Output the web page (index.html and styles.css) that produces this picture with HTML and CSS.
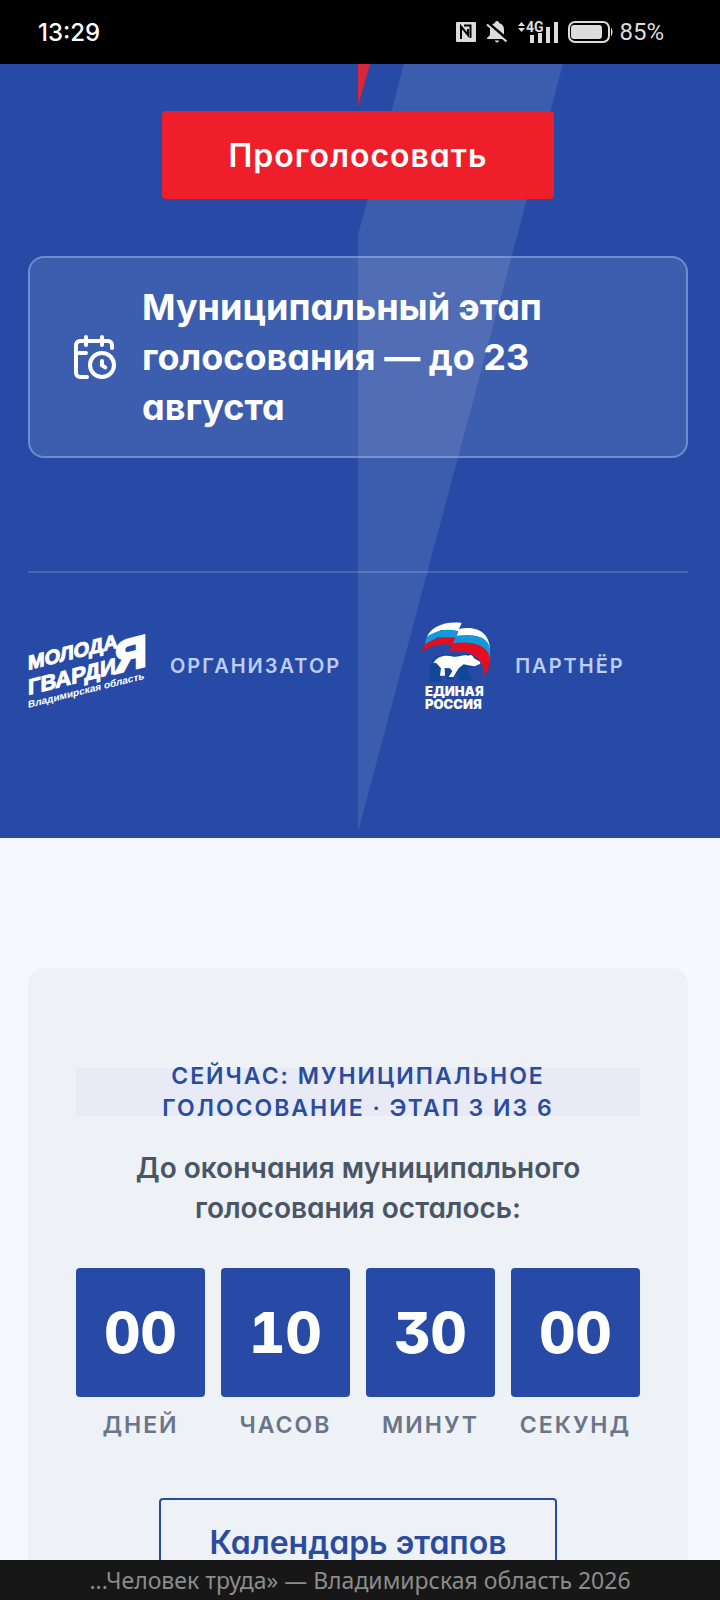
FILE: index.html
```html
<!DOCTYPE html>
<html lang="ru">
<head>
    <meta charset="UTF-8">
    <meta name="viewport" content="width=device-width, initial-scale=1.0">
    <title>Человек труда — Владимирская область 2026</title>
    <link rel="stylesheet" href="styles.css">
</head>
<body>
    <header class="status-bar">
        <span class="status-time">13:29</span>
        <div class="status-icons">
            <svg width="20" height="20" viewBox="0 0 20 20">
                <rect width="20" height="20" rx="1" fill="#dcdcdc"/>
                <path d="M5 17V4.500L12 13V7M8 3.500h6.500V16" fill="none" stroke="#000" stroke-width="2"/>
            </svg>
            <svg width="22" height="22" viewBox="0 0 22 22">
                <path d="M11 0c1.300 0 2 .9 2 2 3.500 1 5 3.500 5 6.500V14l3 4H1v-1l3-3V8.500C4 5.500 5.500 3 9 2c0-1.100.7-2 2-2zM9 19.500h4c0 1-1 2-2 2s-2-1-2-2z" fill="#dcdcdc"/>
                <path d="M1 1l21 18" stroke="#000" stroke-width="3"/>
                <path d="M1 3.500l19.500 17" stroke="#dcdcdc" stroke-width="2"/>
            </svg>
            <svg class="signal" width="40" height="22" viewBox="0 0 40 22" fill="#dcdcdc">
                <path d="M0 5l3.500-4L7 5zM0 7h7l-3.500 4z"/>
                <text x="8" y="11" class="net-label">4G</text>
                <path d="M12 14h4v8h-4zM20 12h4v10h-4zM28 6h4v16h-4zM36 1h4v21h-4z"/>
            </svg>
            <svg width="45" height="22" viewBox="0 0 45 22">
                <rect x="1" y="1" width="40" height="20" rx="6" fill="none" stroke="#dcdcdc" stroke-width="2"/>
                <rect x="3" y="4" width="31" height="14" rx="3" fill="#dcdcdc"/>
                <path d="M43 7c2 1 2 7 0 8z" fill="#dcdcdc"/>
            </svg>
            <span class="battery">85%</span>
        </div>
    </header>

    <main class="page">
        <section class="hero">
            <svg class="hero-decor" width="206" height="774" viewBox="0 0 206 774">
                <path d="M46 0H205L0 768V171z" fill="#fff" fill-opacity=".1"/>
                <path d="M0 0h12L0 42z" fill="#d9263b"/>
            </svg>

            <button class="btn btn-vote" type="button">Проголосовать</button>

            <div class="stage-card">
                <svg class="stage-icon" viewBox="0 0 24 24">
                    <path d="M16 14v2.200l1.600 1M16 2v4M21 7.500V6a2 2 0 0 0-2-2H5a2 2 0 0 0-2 2v14a2 2 0 0 0 2 2h3.500M3 10h5M8 2v4"/>
                    <circle cx="16" cy="16" r="6"/>
                </svg>
                <p class="stage-text">Муниципальный этап голосования — до 23 августа</p>
            </div>

            <div class="partners">
                <div class="partner">
                    <svg class="logo-mger" width="118" height="90" viewBox="0 0 118 90" role="img" aria-label="Молодая Гвардия">
                        <g transform="skewY(-14)">
                            <text x="0" y="49" font-size="20">МОЛОДА</text>
                            <text x="0" y="74" font-size="22">ГВАРДИ</text>
                            <text x="87" y="74" font-size="44" class="mger-big">Я</text>
                            <text x="0" y="87" font-size="10" class="mger-region">Владимирская область</text>
                        </g>
                    </svg>
                    <span class="partner-role">Организатор</span>
                </div>
                <div class="partner">
                    <svg width="70" height="90" viewBox="60 65 210 270" role="img" aria-label="Единая Россия">
                        <path d="M77 116C86 84 132 64 182 71L174 89C218 80 268 92 267 156L250 130L165 112L172 96L120 92z" fill="#fff"/>
                        <path d="M78 112C106 94 138 86 171 95L164 109C206 104 262 104 267 150V186L230 144L155 134L162 117L110 114L70 138z" fill="#1598d8"/>
                        <path d="M71 135C98 118 130 110 163 115L155 132C200 124 264 132 266 178C267 202 259 219 246 230C256 180 212 150 146 155L154 138C122 130 88 139 60 159z" fill="#e30f20"/>
                        <path d="M95 183C107 160 150 163 174 167C202 157 221 166 235 184L240 194L219 204L198 207L206 228L220 244H176L165 222L155 240H139L130 213L118 236L128 246H84C84 224 86 199 95 183z" fill="#12489a"/>
                        <path d="M97 192C108 169 135 166 157 172C174 175 184 164 202 169C210 164 216 169 219 177L237 187L238 193L221 201L202 198L188 195L173 207L157 233H143L154 216L147 207L131 206L132 229H117L120 207L105 190z" fill="#fff"/>
                        <g class="er-name">
                            <text x="72" y="290">ЕДИНАЯ</text>
                            <text x="72" y="329">РОССИЯ</text>
                        </g>
                    </svg>
                    <span class="partner-role">Партнёр</span>
                </div>
            </div>
        </section>

        <section class="timer-card">
            <p class="timer-badge">Сейчас: муниципальное голосование · этап 3 из 6</p>
            <h2 class="timer-title">До окончания муниципального голосования осталось:</h2>
            <div class="timer">
                <div class="timer-item">
                    <div class="timer-value">00</div>
                    <div class="timer-label">Дней</div>
                </div>
                <div class="timer-item">
                    <div class="timer-value">10</div>
                    <div class="timer-label">Часов</div>
                </div>
                <div class="timer-item">
                    <div class="timer-value">30</div>
                    <div class="timer-label">Минут</div>
                </div>
                <div class="timer-item">
                    <div class="timer-value">00</div>
                    <div class="timer-label">Секунд</div>
                </div>
            </div>
            <button class="btn btn-outline" type="button">Календарь этапов</button>
        </section>
    </main>

    <footer class="title-bar">...Человек труда» — Владимирская область 2026</footer>
</body>
</html>
```
FILE: styles.css
```css
* {
    box-sizing: border-box;
}
body {
    display: flex;
    flex-direction: column;
    height: 100vh;
    margin: 0;
    background: #f5f8fd;
    font-family: Inter, sans-serif;
    font-feature-settings: "cv11";
}
p, h2 {
    margin: 0;
}

/* status bar */
.status-bar {
    display: flex;
    flex: none;
    align-items: center;
    justify-content: space-between;
    height: 64px;
    padding: 0 56px 0 38px;
    background: #000;
    color: #fff;
    font-size: 24px;
    font-weight: 500;
}
.status-icons {
    display: flex;
    align-items: center;
    gap: 10px;
    color: #dcdcdc;
}
.battery {
    margin-left: -4px;
    font-family: Roboto, sans-serif;
    font-weight: 400;
}
.signal {
    overflow: visible;
}
.net-label {
    font: 700 14px Roboto, sans-serif;
}

/* page */
.page {
    flex: 1;
    min-height: 0;
    overflow: hidden;
}
.hero {
    position: relative;
    padding: 47px 32px 127px 28px;
    background: #264aa5;
    color: #fff;
}
.hero-decor {
    position: absolute;
    top: 0;
    left: calc(50% - 2px);
}
.btn {
    position: relative;
    display: block;
    height: 88px;
    margin: 0 auto;
    padding: 0 66px;
    border: none;
    border-radius: 4px;
    font-family: inherit;
    font-feature-settings: inherit;
    font-size: 32px;
    font-weight: 600;
    cursor: pointer;
}
.btn-vote {
    background: #ee1f2a;
    color: #fff;
    letter-spacing: 1px;
}
.stage-card {
    position: relative;
    display: flex;
    align-items: center;
    gap: 24px;
    margin-top: 57px;
    padding: 24px 40px;
    border: 2px solid rgba(150, 180, 235, 0.55);
    border-radius: 16px;
    background: rgba(255, 255, 255, 0.11);
}
.stage-icon {
    flex: none;
    width: 48px;
    height: 48px;
    fill: none;
    stroke: #fff;
    stroke-width: 2;
    stroke-linecap: round;
    stroke-linejoin: round;
}
.stage-text {
    font-size: 36px;
    font-weight: 700;
    line-height: 50px;
}
.partners {
    position: relative;
    display: flex;
    gap: 80px;
    margin-top: 113px;
    padding-top: 48px;
    border-top: 2px solid rgba(255, 255, 255, 0.16);
}
.partner {
    display: flex;
    align-items: center;
    gap: 24px;
}
.partner-role {
    color: #bccdf8;
    font-size: 20px;
    font-weight: 600;
    letter-spacing: 2px;
    text-transform: uppercase;
}
.logo-mger {
    overflow: visible;
    fill: #fff;
    stroke: #fff;
    font-family: "Liberation Sans", sans-serif;
    font-weight: 700;
}
.mger-big {
    stroke-width: 3;
}
.mger-region {
    stroke: none;
}
.er-name {
    fill: #fff;
    font-size: 39px;
    font-weight: 900;
    font-feature-settings: normal;
}

/* countdown */
.timer-card {
    margin: 130px 32px 0 28px;
    padding: 84px 48px 64px;
    border-radius: 16px;
    background: #eef2f7;
    text-align: center;
}
.timer-badge {
    padding: 8px 0;
    color: #2a4c9f;
    font-size: 23px;
    font-weight: 600;
    line-height: 32px;
    letter-spacing: 2px;
    text-transform: uppercase;
    background: linear-gradient(#e8ebf6, #e8ebf6) center / 100% 48px no-repeat;
}
.timer-title {
    margin-top: 16px;
    color: #4a5565;
    font-size: 28px;
    font-weight: 600;
    line-height: 40px;
}
.timer {
    display: grid;
    grid-template-columns: repeat(4, 1fr);
    gap: 16px;
    margin-top: 40px;
}
.timer-value {
    display: flex;
    align-items: center;
    justify-content: center;
    aspect-ratio: 1;
    border-radius: 4px;
    background: #264aa5;
    color: #fff;
    font-size: 56px;
    font-weight: 800;
    font-feature-settings: "tnum", "cv09";
}
.timer-label {
    margin-top: 12px;
    color: #6a7588;
    font-size: 23px;
    font-weight: 600;
    line-height: 32px;
    letter-spacing: 2px;
    text-transform: uppercase;
}
.btn-outline {
    margin-top: 57px;
    padding: 0 48px;
    border: 2px solid #2a4c9f;
    background: transparent;
    color: #2a4c9f;
}

/* bottom bar */
.title-bar {
    flex: none;
    height: 40px;
    background: #171717;
    color: #8c8c8c;
    font-family: "Noto Sans", sans-serif;
    font-feature-settings: normal;
    font-size: 23px;
    line-height: 40px;
    text-align: center;
}
```
